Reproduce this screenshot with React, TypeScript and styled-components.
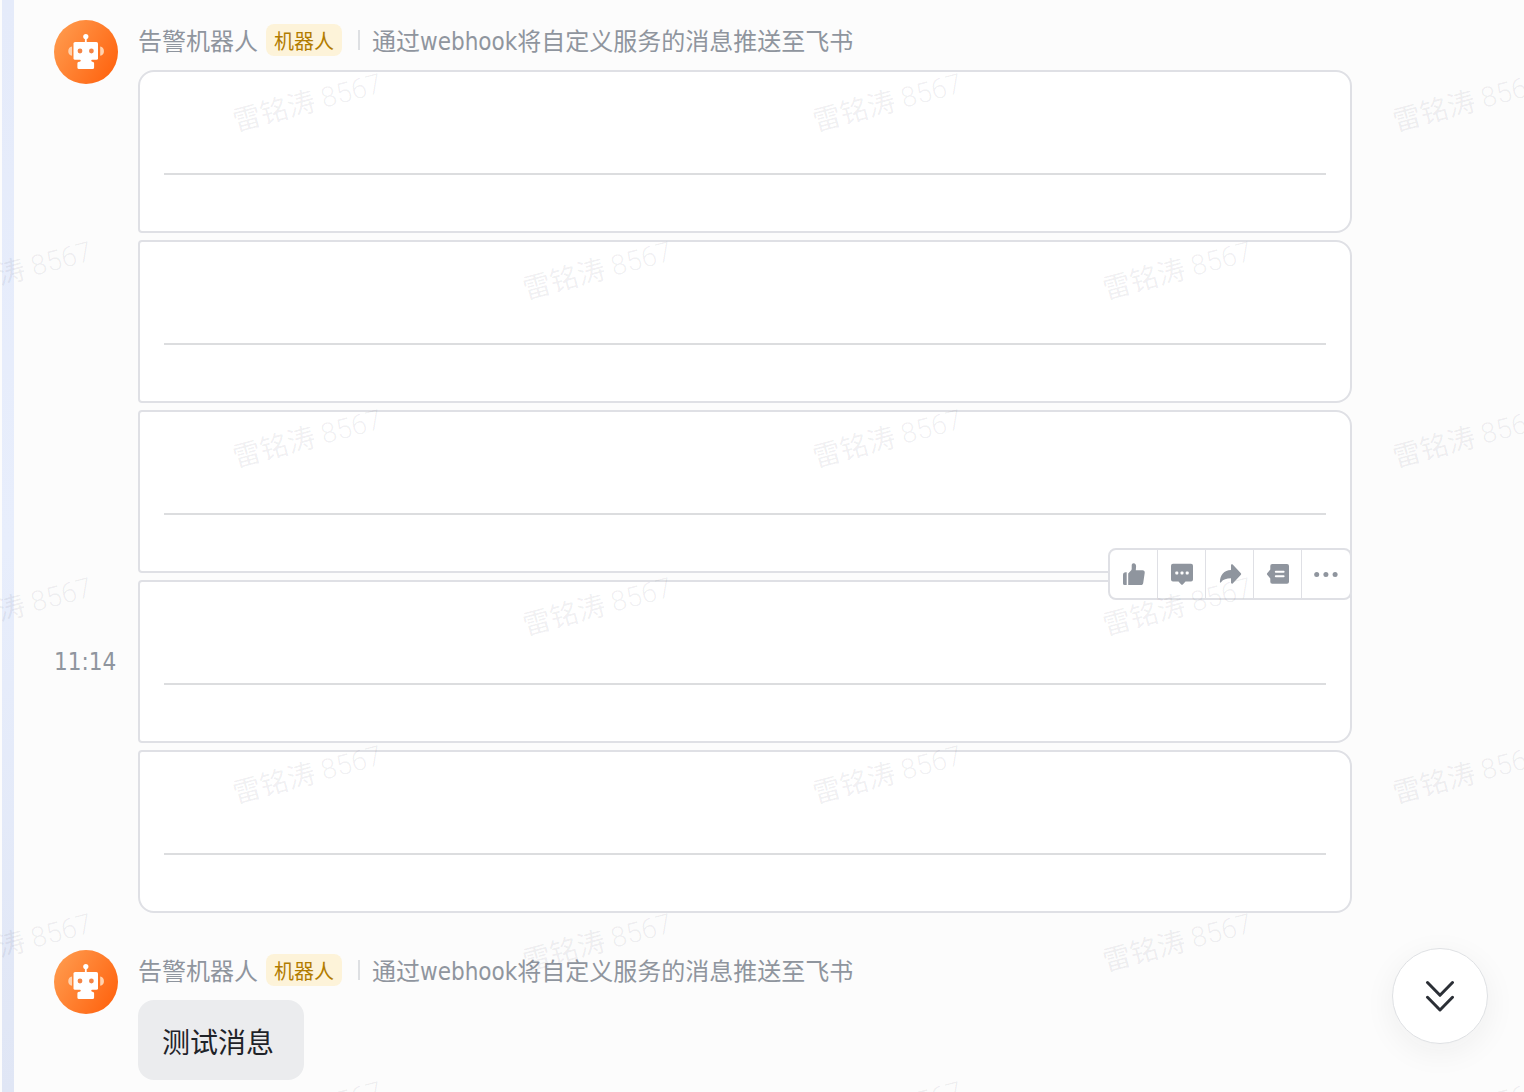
import React from "react";
import styled, { createGlobalStyle } from "styled-components";

const GlobalStyle = createGlobalStyle`
  *, *::before, *::after { box-sizing: border-box; }
  body {
    margin: 0;
    background: #fcfcfc;
    font-family: "DejaVu Sans Condensed", "Liberation Sans", "Noto Sans CJK SC", sans-serif;
  }
`;

const Page = styled.div`
  position: relative;
  display: flex;
  min-height: 100vh;
  padding-left: 2px;
  overflow: hidden;
`;

const SideStrip = styled.div`
  flex: none;
  width: 12px;
  background: linear-gradient(#e5ebfa, #e8eefc 50%, #e0e6f5);
`;

const Feed = styled.main`
  flex: 1;
  min-width: 0;
  display: flex;
  flex-direction: column;
  gap: 37px;
  padding: 20px 172px 12px 40px;
`;

const Message = styled.article`
  display: grid;
  grid-template-columns: 64px minmax(0, 1fr);
  column-gap: 20px;
`;

const AvatarSvg = styled.svg`
  display: block;
  width: 64px;
  height: 64px;
  margin-bottom: -14px;
`;

const Header = styled.header`
  display: flex;
  align-items: center;
  height: 40px;
  margin-bottom: 10px;
  font-size: 24px;
  line-height: 32px;
  color: #8f959e;
  white-space: nowrap;
`;

const HeaderText = styled.span`
  padding-top: 4px;
`;

const Tag = styled.span`
  height: 32px;
  margin-left: 8px;
  padding: 4px 8px 0;
  border-radius: 8px;
  background: #fdf3d9;
  color: #b27c00;
  font-size: 20px;
  line-height: 28px;
`;

const Separator = styled.span`
  width: 2px;
  height: 20px;
  margin: 0 12px 0 16px;
  background: #dee0e3;
`;

const CardCell = styled.div`
  grid-column: 2;
  position: relative;
  margin-bottom: 7px;

  &:last-child {
    margin-bottom: 0;
  }
`;

const Card = styled.section<{ $first?: boolean; $last?: boolean }>`
  padding: 101px 24px 56px;
  border: 2px solid #dfe0e5;
  border-radius: ${(p) => (p.$first ? 16 : 4)}px 16px 16px ${(p) => (p.$last ? 16 : 4)}px;
  background: #fff;
`;

const Divider = styled.hr`
  height: 2px;
  margin: 0;
  border: 0;
  background: #dcdddf;
`;

const Time = styled.time`
  grid-column: 1;
  align-self: center;
  margin-bottom: 7px;
  color: #8f959e;
  font-size: 24px;
  line-height: 32px;
`;

const Toolbar = styled.div`
  position: absolute;
  top: -32px;
  right: 0;
  display: flex;
  border: 2px solid #dfe0e5;
  border-radius: 8px;
  background: #fff;
`;

const ToolButton = styled.button`
  width: 48px;
  height: 48px;
  padding: 12px 11px 12px 12px;
  border: 0;
  border-right: 1px solid #dfe0e5;
  background: transparent;
  color: #8f959e;
  cursor: pointer;

  &:last-child {
    border-right: 0;
  }

  svg {
    display: block;
    width: 24px;
    height: 24px;
  }
`;

const Bubble = styled.p`
  grid-column: 2;
  justify-self: start;
  margin: 0;
  padding: 24px 30px 16px 24px;
  border-radius: 16px;
  background: #ebecee;
  color: #1f2329;
  font-size: 28px;
  line-height: 40px;
`;

const JumpButton = styled.button`
  position: fixed;
  right: 36px;
  bottom: 48px;
  display: grid;
  place-items: center;
  width: 96px;
  height: 96px;
  padding: 0;
  border: 1px solid #dee0e3;
  border-radius: 50%;
  background: #fff;
  color: #2b2f36;
  box-shadow: 0 8px 32px rgba(31, 35, 41, 0.06);
  cursor: pointer;

  svg {
    display: block;
    width: 32px;
    height: 32px;
  }
`;

const WatermarkLayer = styled.div`
  position: absolute;
  inset: 0;
  padding-top: 19px;
  overflow: hidden;
  pointer-events: none;
  user-select: none;
`;

const WatermarkRow = styled.div<{ $shifted: boolean }>`
  display: flex;
  height: 168px;
  margin-left: ${(p) => (p.$shifted ? -273 : 17)}px;
`;

const WatermarkCell = styled.div`
  flex: none;
  display: grid;
  place-items: center;
  width: 580px;
`;

const WatermarkText = styled.span`
  transform: rotate(-15deg);
  color: rgba(31, 35, 65, 0.07);
  font-family: Roboto, "Noto Sans CJK SC", sans-serif;
  font-size: 28px;
  font-weight: 300;
  line-height: 32px;
  white-space: nowrap;
`;

const WatermarkName = styled.span`
  font-weight: 400;
`;

const RobotAvatar = ({ id }: { id: string }) => (
  <AvatarSvg viewBox="0 0 64 64" role="img" aria-label="告警机器人">
    <defs>
      <linearGradient id={id} x1="0" y1="0.2" x2="1" y2="0.8">
        <stop offset="0" stopColor="#ff9a4d" />
        <stop offset="1" stopColor="#ff630f" />
      </linearGradient>
    </defs>
    <circle cx="32" cy="32" r="32" fill={`url(#${id})`} />
    <path d="M18 26.6v9.200a4.700 4.700 0 0 1 0-9.200zM46.200 26.600v9.200a4.700 4.700 0 0 0 0-9.200z" fill="#ffd3b0" />
    <circle cx="31.800" cy="16.600" r="2.600" fill="#fff" />
    <path d="M31.800 17v6" stroke="#fff" strokeWidth="1.800" />
    <rect x="19.500" y="22" width="24.500" height="17.800" rx="1.600" fill="#fff" />
    <path d="M26 39h12l-.8 1.700.8 1h.5a1.600 1.600 0 0 1 1.600 1.600v4.100a1.600 1.600 0 0 1-1.600 1.600h-13.500a1.600 1.600 0 0 1-1.600-1.600v-4.100a1.600 1.600 0 0 1 1.600-1.600h1l.8-1z" fill="#fff" />
    <circle cx="26" cy="31" r="2.400" fill="#f58445" />
    <circle cx="37.400" cy="31" r="2.400" fill="#f58445" />
  </AvatarSvg>
);

const tools = [
  {
    label: "点赞",
    icon: (
      <>
        <path d="M4.700 10.300V23H2.600A1.600 1.600 0 0 1 1 21.400V13a2.700 2.700 0 0 1 2.700-2.700z" />
        <path d="M6.200 23V11.400l2.600-2.600c.6-.6.9-1.200.9-2.100V3.300c0-1.200.8-2 1.900-2 1.700 0 2.600 1.300 2.500 3.200L13.800 8.200h6.700c1.600 0 2.500 1.200 2.200 2.700l-1.500 10c-.2 1.300-1 2.100-2.300 2.100z" />
      </>
    ),
  },
  {
    label: "回复",
    icon: (
      <>
        <path d="M3 1.800h18a2 2 0 0 1 2 2v13.700a2 2 0 0 1-2 2h-5.500l-2.700 2.900a1.100 1.100 0 0 1-1.600 0l-2.700-2.900H3a2 2 0 0 1-2-2V3.800a2 2 0 0 1 2-2z" />
        <g fill="#fff">
          <rect x="5.300" y="9.500" width="3" height="3" rx="1" />
          <rect x="10.500" y="9.500" width="3" height="3" rx="1" />
          <rect x="15.700" y="9.500" width="3" height="3" rx="1" />
        </g>
      </>
    ),
  },
  {
    label: "转发",
    icon: (
      <path d="M13 3.200c0-.9 1-1.300 1.700-.7l8.200 8.700c.4.500.4 1.100 0 1.600l-8.200 8.600c-.7.6-1.700.2-1.700-.6v-4.500c-4.500 0-7.800 1-10 4-.4.600-1.100.400-1.100-.3C2 13 6 8.200 13 8z" />
    ),
  },
  {
    label: "话题",
    icon: (
      <>
        <path d="M6.300 2H21a2 2 0 0 1 2 2v15.700a2 2 0 0 1-2 2H6.300a2 2 0 0 1-2-2v-3.200L1.400 13a1.400 1.400 0 0 1 0-2l2.900-3.500V4a2 2 0 0 1 2-2z" />
        <path d="M9.800 9.800h7.800M9.800 14.300h7.800" stroke="#fff" strokeWidth="2" strokeLinecap="round" />
      </>
    ),
  },
  {
    label: "更多",
    icon: (
      <>
        <circle cx="2.700" cy="12.400" r="2.500" />
        <circle cx="11.900" cy="12.400" r="2.500" />
        <circle cx="21.100" cy="12.400" r="2.500" />
      </>
    ),
  },
];

const MessageHeader = () => (
  <Header>
    <HeaderText>告警机器人</HeaderText>
    <Tag>机器人</Tag>
    <Separator />
    <HeaderText>通过webhook将自定义服务的消息推送至飞书</HeaderText>
  </Header>
);

const cards = [0, 1, 2, 3, 4];
const hovered = 3;

export default function App() {
  return (
    <>
      <GlobalStyle />
      <Page>
        <SideStrip />
        <Feed>
          <Message>
            <RobotAvatar id="avatar-a" />
            <MessageHeader />
            {cards.map((n) => (
              <React.Fragment key={n}>
                {n === hovered && <Time>11:14</Time>}
                <CardCell>
                  <Card $first={n === 0} $last={n === cards.length - 1}>
                    <Divider />
                  </Card>
                  {n === hovered && (
                    <Toolbar role="toolbar" aria-label="消息操作">
                      {tools.map((t) => (
                        <ToolButton key={t.label} type="button" aria-label={t.label}>
                          <svg viewBox="0 0 24 24" fill="currentColor" aria-hidden="true">
                            {t.icon}
                          </svg>
                        </ToolButton>
                      ))}
                    </Toolbar>
                  )}
                </CardCell>
              </React.Fragment>
            ))}
          </Message>
          <Message>
            <RobotAvatar id="avatar-b" />
            <MessageHeader />
            <Bubble>测试消息</Bubble>
          </Message>
        </Feed>
        <WatermarkLayer aria-hidden="true">
          {Array.from({ length: 7 }, (_, row) => (
            <WatermarkRow key={row} $shifted={row % 2 === 1}>
              {Array.from({ length: 3 }, (_, col) => (
                <WatermarkCell key={col}>
                  <WatermarkText>
                    <WatermarkName>雷铭涛</WatermarkName> 8567
                  </WatermarkText>
                </WatermarkCell>
              ))}
            </WatermarkRow>
          ))}
        </WatermarkLayer>
        <JumpButton type="button" aria-label="跳到最新消息">
          <svg viewBox="0 0 32 32" fill="none" stroke="currentColor" strokeWidth="3" strokeLinecap="round" strokeLinejoin="round" aria-hidden="true">
            <path d="M3.500 2.500 16 15.300 28.500 2.500M3.500 17.300 16 30 28.500 17.300" />
          </svg>
        </JumpButton>
      </Page>
    </>
  );
}
